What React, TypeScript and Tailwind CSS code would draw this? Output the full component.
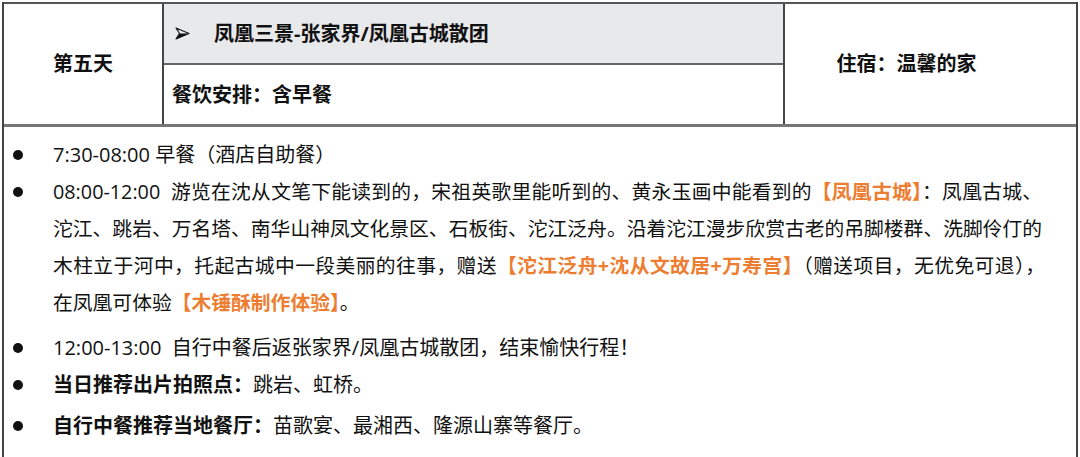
import React from 'react';

const font = { fontFamily: '"Open Sans", "Noto Sans CJK SC", sans-serif' };

function Orange({ children }: { children: React.ReactNode }) {
  return <span className="font-bold text-[#ed7d31]">{children}</span>;
}

function Item({ children, className = '' }: { children: React.ReactNode; className?: string }) {
  return (
    <div className={`flex ${className}`}>
      <div className="w-[49px] h-[37px] shrink-0 flex items-center">
        <span className="ml-[9px] w-[10px] h-[10px] rounded-full bg-[#111]" />
      </div>
      <div className="w-[992px]">{children}</div>
    </div>
  );
}

export default function App() {
  return (
    <div className="w-[1080px] h-[457px] bg-white overflow-hidden text-[#111]" style={font}>
      <div className="ml-[2px] mt-[2px] w-[1076px] border-x-2 border-[#444]">
        {/* header table */}
        <div className="flex border-t-2 border-b-[3px] border-[#555] border-b-[#777] h-[125px]">
          <div className="w-[160px] flex items-center justify-center text-[20px] font-bold border-r-2 border-[#444]">
            第五天
          </div>
          <div className="w-[621px] flex flex-col border-r-2 border-[#444]">
            <div className="h-[61px] bg-[#e8e9eb] flex items-center text-[20px] font-bold border-b-2 border-[#666]">
              <span className="ml-[11px] w-[39px] flex items-center">
                <svg width="15" height="13" viewBox="0 0 15 13">
                  <path d="M1 1 L14 6.5 L1 12 L4.5 6.5 Z" fill="none" stroke="#111" strokeWidth="1.1" strokeLinejoin="round" />
                  <path d="M4.5 6.5 L14 6.5 L1 12 Z" fill="#111" />
                </svg>
              </span>
              <span>凤凰三景-张家界/凤凰古城散团</span>
            </div>
            <div className="flex-1 flex items-center pl-[8px] text-[20px] font-bold">餐饮安排：含早餐</div>
          </div>
          <div className="flex-1 flex items-center justify-center pr-[48px] text-[20px] font-bold">住宿：温馨的家</div>
        </div>

        {/* itinerary */}
        <div className="pt-[9px] pb-[20px] text-[20px] leading-[37px]">
          <Item>7:30-08:00 早餐（酒店自助餐）</Item>
          <Item className="mb-[8px]">
            <div className="text-[19.8px] whitespace-nowrap">
              <div className="[text-align-last:justify] w-[989px]">
                08:00-12:00&nbsp; 游览在沈从文笔下能读到的，宋祖英歌里能听到的、黄永玉画中能看到的<Orange>【凤凰古城】</Orange>：凤凰古城、
              </div>
              <div className="[text-align-last:justify] w-[985px]">
                沱江、跳岩、万名塔、南华山神凤文化景区、石板街、沱江泛舟。沿着沱江漫步欣赏古老的吊脚楼群、洗脚伶仃的
              </div>
              <div className="[text-align-last:justify] w-[992px]">
                木柱立于河中，托起古城中一段美丽的往事，赠送<Orange>【沱江泛舟+沈从文故居+万寿宫】</Orange>（赠送项目，无优免可退），
              </div>
              <div>
                在凤凰可体验<Orange>【木锤酥制作体验】</Orange>。
              </div>
            </div>
          </Item>
          <Item>12:00-13:00&nbsp; 自行中餐后返张家界/凤凰古城散团，结束愉快行程！</Item>
          <Item className="mb-[4px]">
            <span className="font-bold">当日推荐出片拍照点：</span>跳岩、虹桥。
          </Item>
          <Item>
            <span className="font-bold">自行中餐推荐当地餐厅：</span>苗歌宴、最湘西、隆源山寨等餐厅。
          </Item>
        </div>
      </div>
    </div>
  );
}
